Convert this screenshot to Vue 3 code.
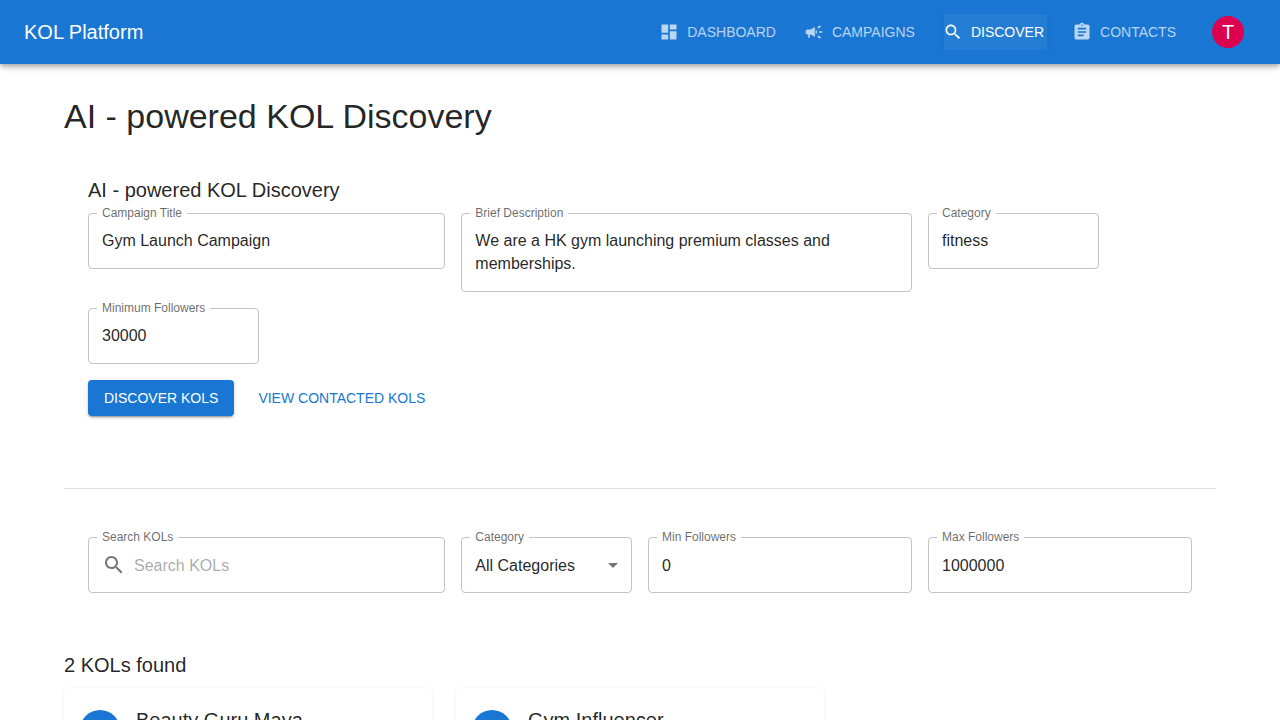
<template>
  <div class="page">
    <header class="app-bar">
      <div class="brand">KOL Platform</div>
      <nav class="nav">
        <a
          v-for="item in navItems"
          :key="item.label"
          class="nav-btn"
          :class="{ active: item.active }"
        >
          <svg class="nav-icon" viewBox="0 0 24 24"><path :d="item.icon" /></svg>
          {{ item.label }}
        </a>
      </nav>
      <div class="avatar-wrap"><div class="user-avatar">T</div></div>
    </header>

    <main class="content">
      <h1 class="page-title">AI - powered KOL Discovery</h1>

      <section class="form-block">
        <h2 class="section-title">AI - powered KOL Discovery</h2>
        <div class="field-grid">
          <label class="field span-4">
            <span class="field-label">Campaign Title</span>
            <input class="field-input" value="Gym Launch Campaign" />
          </label>
          <label class="field span-5">
            <span class="field-label">Brief Description</span>
            <textarea
              class="field-input field-area"
              rows="2"
              :value="brief"
            ></textarea>
          </label>
          <label class="field span-2">
            <span class="field-label">Category</span>
            <input class="field-input" value="fitness" />
          </label>
          <label class="field span-2">
            <span class="field-label">Minimum Followers</span>
            <input class="field-input" value="30000" />
          </label>
        </div>
        <div class="actions">
          <button class="btn-primary">DISCOVER KOLS</button>
          <button class="btn-text">VIEW CONTACTED KOLS</button>
        </div>
      </section>

      <hr class="divider" />

      <section class="filter-block">
        <div class="field-grid">
          <label class="field span-4">
            <span class="field-label">Search KOLs</span>
            <div class="with-icon">
              <svg class="search-icon" viewBox="0 0 24 24"><path :d="searchPath" /></svg>
              <input class="field-input inner-input" placeholder="Search KOLs" />
            </div>
          </label>
          <div class="field span-2">
            <span class="field-label">Category</span>
            <div class="field-select">
              <span>All Categories</span>
              <svg class="select-arrow" viewBox="0 0 24 24"><path d="M7 10l5 5 5-5z" /></svg>
            </div>
          </div>
          <label class="field span-3">
            <span class="field-label">Min Followers</span>
            <input class="field-input" value="0" />
          </label>
          <label class="field span-3">
            <span class="field-label">Max Followers</span>
            <input class="field-input" value="1000000" />
          </label>
        </div>
      </section>

      <h2 class="results-title">{{ kols.length }} KOLs found</h2>
      <div class="card-grid">
        <article v-for="kol in kols" :key="kol.name" class="kol-card">
          <div class="kol-head">
            <div class="kol-avatar"></div>
            <div>
              <div class="kol-name">{{ kol.name }}</div>
              <div class="kol-sub">{{ kol.handle }}</div>
            </div>
          </div>
        </article>
      </div>
    </main>
  </div>
</template>

<script setup>
const searchPath =
  'M15.5 14h-.79l-.28-.27C15.41 12.59 16 11.11 16 9.5 16 5.91 13.09 3 9.5 3S3 5.91 3 9.5 5.91 16 9.5 16c1.61 0 3.09-.59 4.23-1.57l.27.28v.79l5 4.99L20.49 19l-4.99-5zm-6 0C7.01 14 5 11.99 5 9.5S7.01 5 9.5 5 14 7.01 14 9.5 11.99 14 9.5 14z'

const navItems = [
  {
    label: 'DASHBOARD',
    icon: 'M3 13h8V3H3v10zm0 8h8v-6H3v6zm10 0h8V11h-8v10zm0-18v6h8V3h-8z'
  },
  {
    label: 'CAMPAIGNS',
    icon: 'M18 11v2h4v-2h-4zm-2 6.61c.96.71 2.21 1.65 3.2 2.39.4-.53.8-1.07 1.2-1.6-.99-.74-2.24-1.68-3.2-2.4-.4.54-.8 1.08-1.2 1.61zM20.4 5.6c-.4-.53-.8-1.07-1.2-1.6-.99.74-2.24 1.68-3.2 2.4.4.53.8 1.07 1.2 1.6.96-.72 2.21-1.65 3.2-2.4zM4 9c-1.1 0-2 .9-2 2v2c0 1.1.9 2 2 2h1v4h2v-4h1l5 3V6L8 9H4zm11.5 3c0-1.33-.58-2.53-1.5-3.35v6.69c.92-.81 1.5-2.01 1.5-3.34z'
  },
  { label: 'DISCOVER', icon: searchPath, active: true },
  {
    label: 'CONTACTS',
    icon: 'M19 3h-4.18C14.4 1.84 13.3 1 12 1c-1.3 0-2.4.84-2.82 2H5c-1.1 0-2 .9-2 2v14c0 1.1.9 2 2 2h14c1.1 0 2-.9 2-2V5c0-1.1-.9-2-2-2zm-7 0c.55 0 1 .45 1 1s-.45 1-1 1-1-.45-1-1 .45-1 1-1zm2 14H7v-2h7v2zm3-4H7v-2h10v2zm0-4H7V7h10v2z'
  }
]

const brief = 'We are a HK gym launching premium classes and memberships.'

const kols = [
  { name: 'Beauty Guru Maya', handle: '@beautyguru_maya' },
  { name: 'Gym Influencer', handle: '@gym_influencer' }
]
</script>

<style>
body {
  background: #fff;
}
</style>

<style scoped>
* {
  box-sizing: border-box;
}

.page {
  height: 100vh;
  overflow: hidden;
  font-family: "Liberation Sans", Arial, sans-serif;
  color: rgba(0, 0, 0, 0.87);
}

.app-bar {
  position: relative;
  display: flex;
  align-items: center;
  height: 64px;
  padding: 0 24px;
  background: #1976d2;
  color: #fff;
  box-shadow: 0 2px 4px -1px rgba(0, 0, 0, 0.2), 0 4px 5px 0 rgba(0, 0, 0, 0.14), 0 1px 10px 0 rgba(0, 0, 0, 0.12);
}

.brand {
  flex: 1;
  font-size: 20px;
  line-height: 32px;
}

.nav {
  display: flex;
  gap: 16px;
}

.nav-btn {
  display: flex;
  align-items: center;
  height: 36px;
  padding: 0 8px;
  border-radius: 4px;
  font-size: 14px;
  color: rgba(255, 255, 255, 0.7);
}

.nav-btn.active {
  color: #fff;
  background: linear-gradient(
    90deg,
    rgba(0, 0, 0, 0.02) 5px,
    rgba(255, 255, 255, 0.05) 5px,
    rgba(255, 255, 255, 0.05) calc(100% - 5px),
    rgba(0, 0, 0, 0.02) calc(100% - 5px)
  );
}

.nav-icon {
  width: 20px;
  height: 20px;
  margin: 0 8px 0 -4px;
  fill: currentColor;
}

.avatar-wrap {
  padding: 12px;
  margin-left: 16px;
}

.user-avatar {
  display: flex;
  align-items: center;
  justify-content: center;
  width: 32px;
  height: 32px;
  border-radius: 50%;
  background: #dc004e;
  font-size: 20px;
}

.content {
  padding: 31px 64px 0;
}

.page-title {
  margin: 0 0 13px;
  font-size: 34px;
  font-weight: 400;
  line-height: 42px;
}

.form-block {
  padding: 24px;
}

.section-title {
  margin: 0 0 7px;
  font-size: 20px;
  font-weight: 400;
  line-height: 32px;
}

.field-grid {
  display: grid;
  grid-template-columns: repeat(12, 1fr);
  gap: 16px;
  align-items: start;
}

.span-2 { grid-column: span 2; }
.span-3 { grid-column: span 3; }
.span-4 { grid-column: span 4; }
.span-5 { grid-column: span 5; }

.field {
  position: relative;
  display: block;
  border: 1px solid rgba(0, 0, 0, 0.23);
  border-radius: 4px;
}

.field-label {
  position: absolute;
  top: -8px;
  left: 8px;
  padding: 0 5px;
  background: #fff;
  font-size: 12px;
  line-height: 15px;
  color: rgba(0, 0, 0, 0.6);
  white-space: nowrap;
}

.field-input {
  display: block;
  width: 100%;
  height: 54px;
  padding: 0 13px;
  border: 0;
  outline: 0;
  background: transparent;
  font: 16px "Liberation Sans", Arial, sans-serif;
  color: rgba(0, 0, 0, 0.87);
}

.field-area {
  height: 77px;
  padding: 14.5px 13px;
  line-height: 23px;
  overflow: hidden;
  resize: none;
}

.with-icon {
  display: flex;
  align-items: center;
  padding-left: 13px;
}

.search-icon {
  flex: none;
  width: 24px;
  height: 24px;
  margin-right: 8px;
  fill: rgba(0, 0, 0, 0.54);
}

.inner-input {
  padding: 0;
}

.inner-input::placeholder {
  color: rgba(0, 0, 0, 0.36);
  opacity: 1;
}

.field-select {
  display: flex;
  align-items: center;
  justify-content: space-between;
  height: 54px;
  padding: 0 6px 0 13px;
  font-size: 16px;
}

.select-arrow {
  width: 24px;
  height: 24px;
  fill: rgba(0, 0, 0, 0.54);
}

.actions {
  display: flex;
  gap: 16px;
  margin-top: 16px;
}

.btn-primary,
.btn-text {
  height: 36px;
  border: 0;
  border-radius: 4px;
  font: 14px "Liberation Sans", Arial, sans-serif;
  cursor: pointer;
}

.btn-primary {
  padding: 0 16px;
  background: #1976d2;
  color: #fff;
  box-shadow: 0 3px 1px -2px rgba(0, 0, 0, 0.2), 0 2px 2px 0 rgba(0, 0, 0, 0.14), 0 1px 5px 0 rgba(0, 0, 0, 0.12);
}

.btn-text {
  padding: 0 8px;
  background: transparent;
  color: #1976d2;
}

.divider {
  height: 1px;
  margin: 48px 0;
  border: 0;
  background: rgba(0, 0, 0, 0.12);
}

.filter-block {
  padding: 0 24px;
}

.filter-block .field-input {
  padding-top: 2px;
}

.filter-block .inner-input {
  padding-left: 0;
}

.filter-block .field-select span {
  padding-top: 2px;
}

.results-title {
  margin: 56px 0 7px;
  font-size: 20px;
  font-weight: 400;
  line-height: 32px;
}

.card-grid {
  display: grid;
  grid-template-columns: repeat(3, 1fr);
  gap: 24px;
}

.kol-card {
  padding: 16px;
  border-radius: 6px;
  box-shadow: 0 1px 4px rgba(0, 0, 0, 0.08);
}

.kol-head {
  display: flex;
  align-items: center;
  gap: 16px;
}

.kol-avatar {
  width: 40px;
  height: 40px;
  border-radius: 50%;
  background: #1976d2;
}

.kol-name {
  font-size: 20px;
  line-height: 32px;
}

.kol-sub {
  font-size: 14px;
  line-height: 20px;
  color: rgba(0, 0, 0, 0.6);
}
</style>
